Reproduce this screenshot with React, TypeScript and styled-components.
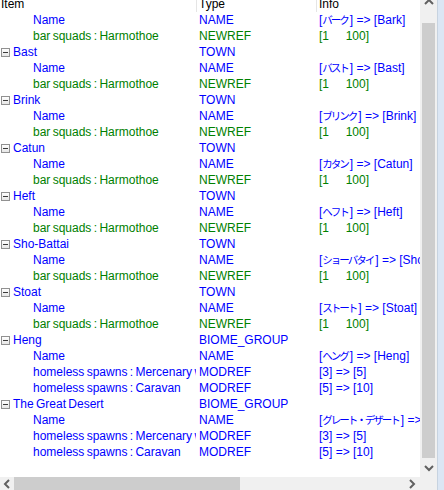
import styled, { createGlobalStyle } from "styled-components";

const GlobalStyle = createGlobalStyle`
  html, body {
    margin: 0;
    padding: 0;
    background: #ffffff;
  }
  body {
    font-family: "Liberation Sans", "Noto Sans CJK JP", sans-serif;
    font-size: 12px;
  }
`;

type Tone = "blue" | "green";

interface Rename {
  jp: string;
  en: string;
}

interface Row {
  depth: 0 | 1;
  item: string;
  type: string;
  info?: string;
  rename?: Rename;
  tone: Tone;
}

const towns: [string, string][] = [
  ["Bast", "バスト"],
  ["Brink", "ブリンク"],
  ["Catun", "カタン"],
  ["Heft", "ヘフト"],
  ["Sho-Battai", "ショーバタイ"],
  ["Stoat", "ストート"],
];

const biomes: [string, string][] = [
  ["Heng", "ヘング"],
  ["The Great Desert", "グレート・デザート"],
];

const squadRange = "[1\u00a0\u00a0\u00a0\u00a0\u00a0100]";

const rows: Row[] = [
  { depth: 1, item: "Name", type: "NAME", rename: { jp: "バーク", en: "Bark" }, tone: "blue" },
  { depth: 1, item: "bar squads : Harmothoe", type: "NEWREF", info: squadRange, tone: "green" },
  ...towns.flatMap(([name, jp]): Row[] => [
    { depth: 0, item: name, type: "TOWN", tone: "blue" },
    { depth: 1, item: "Name", type: "NAME", rename: { jp, en: name }, tone: "blue" },
    { depth: 1, item: "bar squads : Harmothoe", type: "NEWREF", info: squadRange, tone: "green" },
  ]),
  ...biomes.flatMap(([name, jp]): Row[] => [
    { depth: 0, item: name, type: "BIOME_GROUP", tone: "blue" },
    { depth: 1, item: "Name", type: "NAME", rename: { jp, en: name }, tone: "blue" },
    { depth: 1, item: "homeless spawns : Mercenary wanderers", type: "MODREF", info: "[3] => [5]", tone: "blue" },
    { depth: 1, item: "homeless spawns : Caravan", type: "MODREF", info: "[5] => [10]", tone: "blue" },
  ]),
];

const Frame = styled.div`
  width: 444px;
  height: 490px;
  display: grid;
  grid-template-columns: 420px 17px 7px;
  grid-template-rows: 477px 13px;
  overflow: hidden;
`;

const ListPane = styled.div`
  display: flex;
  flex-direction: column;
  overflow: hidden;
  background: #ffffff;
`;

const Header = styled.div`
  height: 12px;
  overflow: hidden;
  display: grid;
  grid-template-columns: 196px 120px 1fr;
`;

const HeadCell = styled.div<{ $divider?: boolean }>`
  height: 16px;
  margin-top: -4px;
  line-height: 16px;
  padding-left: ${(p) => (p.$divider ? "2px" : "1px")};
  border-left: ${(p) => (p.$divider ? "1px solid #e5e5e5" : "none")};
  color: #000000;
  white-space: nowrap;
`;

const RowLine = styled.div`
  height: 16px;
  display: grid;
  grid-template-columns: 196px 120px 104px;
  line-height: 16px;
`;

const Cell = styled.div<{ $tone: Tone; $pad?: number }>`
  color: ${(p) => (p.$tone === "green" ? "#008000" : "#0000ff")};
  padding-left: ${(p) => p.$pad ?? 3}px;
  white-space: nowrap;
  overflow: hidden;
  display: flex;
  align-items: center;
`;

const ItemCell = styled(Cell)`
  word-spacing: -1px;
`;

const Kana = styled.span`
  font-size: 10.5px;
  letter-spacing: -2px;
  margin-right: 2px;
`;

const Expander = styled.span`
  box-sizing: border-box;
  width: 9px;
  height: 9px;
  margin: 1px 3px 0 0;
  border: 1px solid #919191;
  background: linear-gradient(#ffffff, #e6e6e6);
  position: relative;
  flex: none;
  &::after {
    content: "";
    position: absolute;
    left: 1px;
    right: 1px;
    top: 3px;
    height: 1px;
    background: #3a3a3a;
  }
`;

const VScroll = styled.div`
  background: #f0f0f0;
  display: flex;
  flex-direction: column;
  align-items: stretch;
`;

const VTop = styled.div`
  height: 23px;
  display: flex;
  justify-content: center;
  align-items: flex-start;
  overflow: hidden;
`;

const UpArrowStub = styled.div`
  margin-top: -5px;
`;

const VThumb = styled.div`
  height: 435px;
  margin: 0 2px;
  background: #cdcdcd;
`;

const VBottom = styled.div`
  flex: 1;
  display: flex;
  justify-content: center;
  align-items: center;
`;

const EdgeStrip = styled.div`
  grid-row: 1 / span 2;
  grid-column: 3;
  border-left: 1px solid #c7d3e0;
  background: #dbe6f4;
`;

const HScroll = styled.div`
  background: #f0f0f0;
  display: flex;
  align-items: flex-start;
`;

const HEnd = styled.div<{ $w: number }>`
  width: ${(p) => p.$w}px;
  height: 13px;
  display: flex;
  justify-content: center;
  align-items: center;
  flex: none;
`;

const HThumb = styled.div`
  width: 226px;
  height: 13px;
  background: #cdcdcd;
`;

const HTrack = styled.div`
  flex: 1;
`;

const Corner = styled.div`
  background: #f0f0f0;
`;

const Chevron = ({ dir }: { dir: "up" | "down" | "left" | "right" }) => {
  const pts = {
    up: "1,6 5,2 9,6",
    down: "1,2 5,6 9,2",
    left: "6,1 2,5 6,9",
    right: "2,1 6,5 2,9",
  }[dir];
  const horiz = dir === "left" || dir === "right";
  return (
    <svg width={horiz ? 8 : 10} height={horiz ? 10 : 8} viewBox={horiz ? "0 0 8 10" : "0 0 10 8"}>
      <polyline points={pts} fill="none" stroke="#606060" strokeWidth="2" />
    </svg>
  );
};

export default function App() {
  return (
    <>
      <GlobalStyle />
      <Frame>
        <ListPane>
          <Header>
            <HeadCell>Item</HeadCell>
            <HeadCell $divider>Type</HeadCell>
            <HeadCell $divider>Info</HeadCell>
          </Header>
          {rows.map((r, i) => (
            <RowLine key={`${i}_row`}>
              <ItemCell $tone={r.tone} $pad={r.depth === 0 ? 1 : 33}>
                {r.depth === 0 && <Expander />}
                {r.item}
              </ItemCell>
              <Cell $tone={r.tone}>{r.type}</Cell>
              <Cell $tone={r.tone}>
                {r.rename ? (
                  <span>
                    [<Kana>{r.rename.jp}</Kana>] =&gt; [{r.rename.en}]
                  </span>
                ) : (
                  r.info
                )}
              </Cell>
            </RowLine>
          ))}
        </ListPane>
        <VScroll>
          <VTop>
            <UpArrowStub>
              <Chevron dir="up" />
            </UpArrowStub>
          </VTop>
          <VThumb />
          <VBottom>
            <Chevron dir="down" />
          </VBottom>
        </VScroll>
        <EdgeStrip />
        <HScroll>
          <HEnd $w={14}>
            <Chevron dir="left" />
          </HEnd>
          <HThumb />
          <HTrack />
          <HEnd $w={17}>
            <Chevron dir="right" />
          </HEnd>
        </HScroll>
        <Corner />
      </Frame>
    </>
  );
}
